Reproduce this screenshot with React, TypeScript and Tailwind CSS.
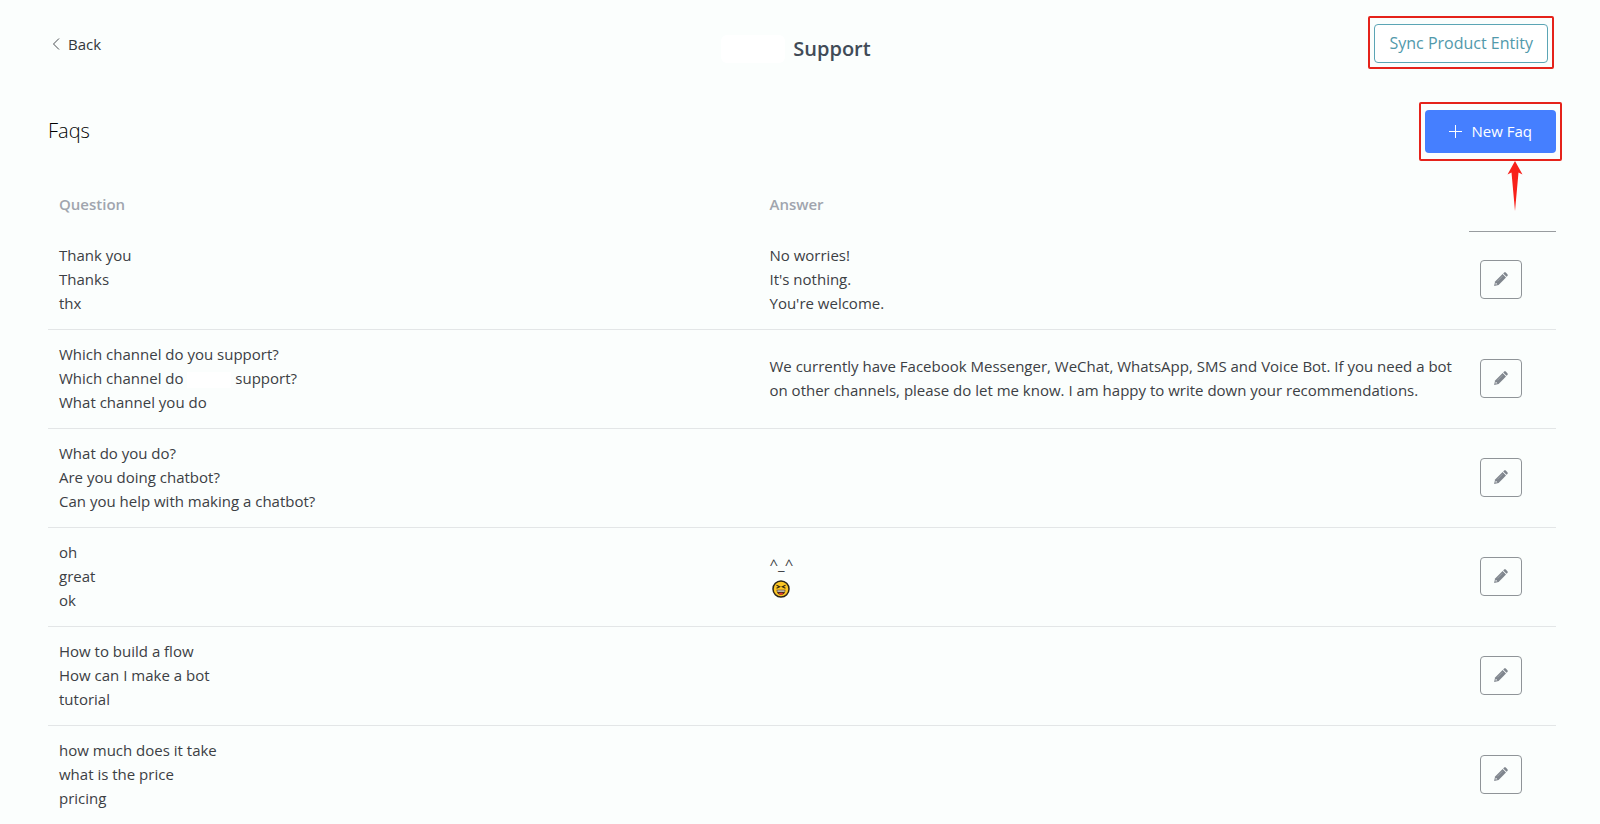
import { Fragment } from 'react';

type Faq = {
  questions: string[];
  answers: string[];
};

const faqs: Faq[] = [
  {
    questions: ['Thank you', 'Thanks', 'thx'],
    answers: ['No worries!', "It's nothing.", "You're welcome."],
  },
  {
    questions: ['Which channel do you support?', 'Which channel do {name} support?', 'What channel you do'],
    answers: [
      'We currently have Facebook Messenger, WeChat, WhatsApp, SMS and Voice Bot. If you need a bot on other channels, please do let me know. I am happy to write down your recommendations.',
    ],
  },
  {
    questions: ['What do you do?', 'Are you doing chatbot?', 'Can you help with making a chatbot?'],
    answers: [],
  },
  {
    questions: ['oh', 'great', 'ok'],
    answers: ['^_^', '{laugh}'],
  },
  {
    questions: ['How to build a flow', 'How can I make a bot', 'tutorial'],
    answers: [],
  },
  {
    questions: ['how much does it take', 'what is the price', 'pricing'],
    answers: [],
  },
];

const LaughIcon = () => (
  <svg viewBox="0 0 18 18" className="h-[18px] w-[18px]" role="img" aria-label="laughing">
    <circle cx="9" cy="9" r="8" fill="#fcc624" stroke="#2b2417" strokeWidth="1.5" />
    <path d="M4.5 5.2 7.6 6.7 4.5 8.2M13.5 5.2 10.4 6.7 13.5 8.2" fill="none" stroke="#33260f" strokeWidth="1.2" />
    <path d="M4.6 9.8h8.8c0 3.2-1.8 5-4.4 5s-4.4-1.8-4.4-5Z" fill="#4a2b18" />
    <path d="M5.3 10.2h7.4v1.8H5.3z" fill="#b9b5a6" />
    <path d="M6.6 13.8c1.2-1.3 3.6-1.3 4.8 0-1.3 1.1-3.5 1.1-4.8 0Z" fill="#f03a2e" />
  </svg>
);

const PencilIcon = () => (
  <svg viewBox="0 0 14 14" className="h-3.5 w-3.5" aria-hidden="true">
    <path d="M9.2 1.5 10.1.6c.5-.5 1.2-.5 1.7 0l1.6 1.6c.5.5.5 1.2 0 1.7L12.5 4.8Z" fill="#7f858d" />
    <path d="M8.6 2 12 5.4 4.6 12.9.1 13.9 1.1 9.4Z" fill="#7f858d" />
    <path d="M1.8 10.7 3.3 12.2 1.4 12.6Z" fill="#fbfefd" />
    <path d="M8.5 4.2 3.3 9.4" stroke="#b4b9be" strokeWidth=".6" />
  </svg>
);

const Line = ({ text }: { text: string }) => {
  if (text === '{laugh}') {
    return (
      <div className="flex h-6 items-end pb-0.5 pl-0.5">
        <LaughIcon />
      </div>
    );
  }
  return (
    <div>
      {text.split('{name}').map((part, i) => (
        <Fragment key={i}>
          {i > 0 && <span className="inline-block h-4 w-11 bg-white align-middle" />}
          {part}
        </Fragment>
      ))}
    </div>
  );
};

const App = () => {
  return (
    <div className="min-h-screen bg-[#fbfefd] pr-11 pl-12 font-['Open_Sans',sans-serif] text-[15px] leading-6 text-[#3c4044]">
      <header className="grid grid-cols-3 items-start pt-6">
        <a href="#" className="flex h-10 items-center gap-2 pl-1 text-[#33373b]">
          <svg viewBox="0 0 8 12" className="h-3 w-2" fill="none" stroke="#4a4e52" aria-hidden="true">
            <path d="M7 .5 1.5 6 7 11.5" />
          </svg>
          Back
        </a>
        <h1 className="flex h-[50px] items-center justify-center gap-2 pr-3 text-xl font-semibold text-[#414b57]">
          <span className="h-7 w-16 rounded-md bg-white" />
          Support
        </h1>
        <div className="flex justify-end pr-2">
          <div className="relative">
            <button
              type="button"
              className="h-[39px] rounded border border-[#5ba5b5] bg-white px-3.5 pb-0.5 text-base text-[#5199ab]"
            >
              Sync Product Entity
            </button>
            <span className="pointer-events-none absolute -inset-x-1.5 -top-2 -bottom-1.5 rounded-xs border-2 border-[#e5231b]" />
          </div>
        </div>
      </header>

      <section className="mt-[35px]">
        <div className="flex h-11 items-center justify-between">
          <h2 className="text-xl font-light text-black">Faqs</h2>
          <div className="relative">
            <button
              type="button"
              className="flex h-[43px] items-center gap-2.5 rounded bg-[#457fff] px-6 text-white"
            >
              <svg viewBox="0 0 13 13" className="h-[13px] w-[13px]" stroke="currentColor" aria-hidden="true">
                <path d="M6.5 0v13M0 6.5h13" />
              </svg>
              New Faq
            </button>
            <span className="pointer-events-none absolute -inset-x-1.5 -inset-y-2 rounded-xs border-2 border-[#e5231b]" />
            <svg
              viewBox="0 0 16 50"
              className="pointer-events-none absolute top-[51px] right-[33px] h-[50px] w-4"
              fill="#f8211a"
              aria-hidden="true"
            >
              <path d="M8 0 15.5 13.5 11.5 11.5 8 50 4.5 11.5.5 13.5Z" />
            </svg>
          </div>
        </div>

        <table className="mt-6 w-full table-fixed border-collapse text-left">
          <thead>
            <tr className="h-[54px] text-[#a0a5ae]">
              <th className="px-[11px] font-semibold">Question</th>
              <th className="px-[11px] font-semibold">Answer</th>
              <th className="w-[87px] border-b border-[#989c9f]" aria-label="Actions" />
            </tr>
          </thead>
          <tbody>
            {faqs.map((faq) => (
              <tr key={faq.questions[0]} className="border-b border-[#e3e6e7]">
                <td className="px-[11px] pt-3 pb-3.5">
                  {faq.questions.map((q) => (
                    <Line key={q} text={q} />
                  ))}
                </td>
                <td className="px-[11px] pt-3 pb-3.5">
                  {faq.answers.map((a) => (
                    <Line key={a} text={a} />
                  ))}
                </td>
                <td className="px-[11px] pb-0.5">
                  <button
                    type="button"
                    aria-label="Edit faq"
                    className="flex h-[39px] w-[42px] items-center justify-center rounded border border-[#8f9498]"
                  >
                    <PencilIcon />
                  </button>
                </td>
              </tr>
            ))}
          </tbody>
        </table>
      </section>
    </div>
  );
};

export default App;
